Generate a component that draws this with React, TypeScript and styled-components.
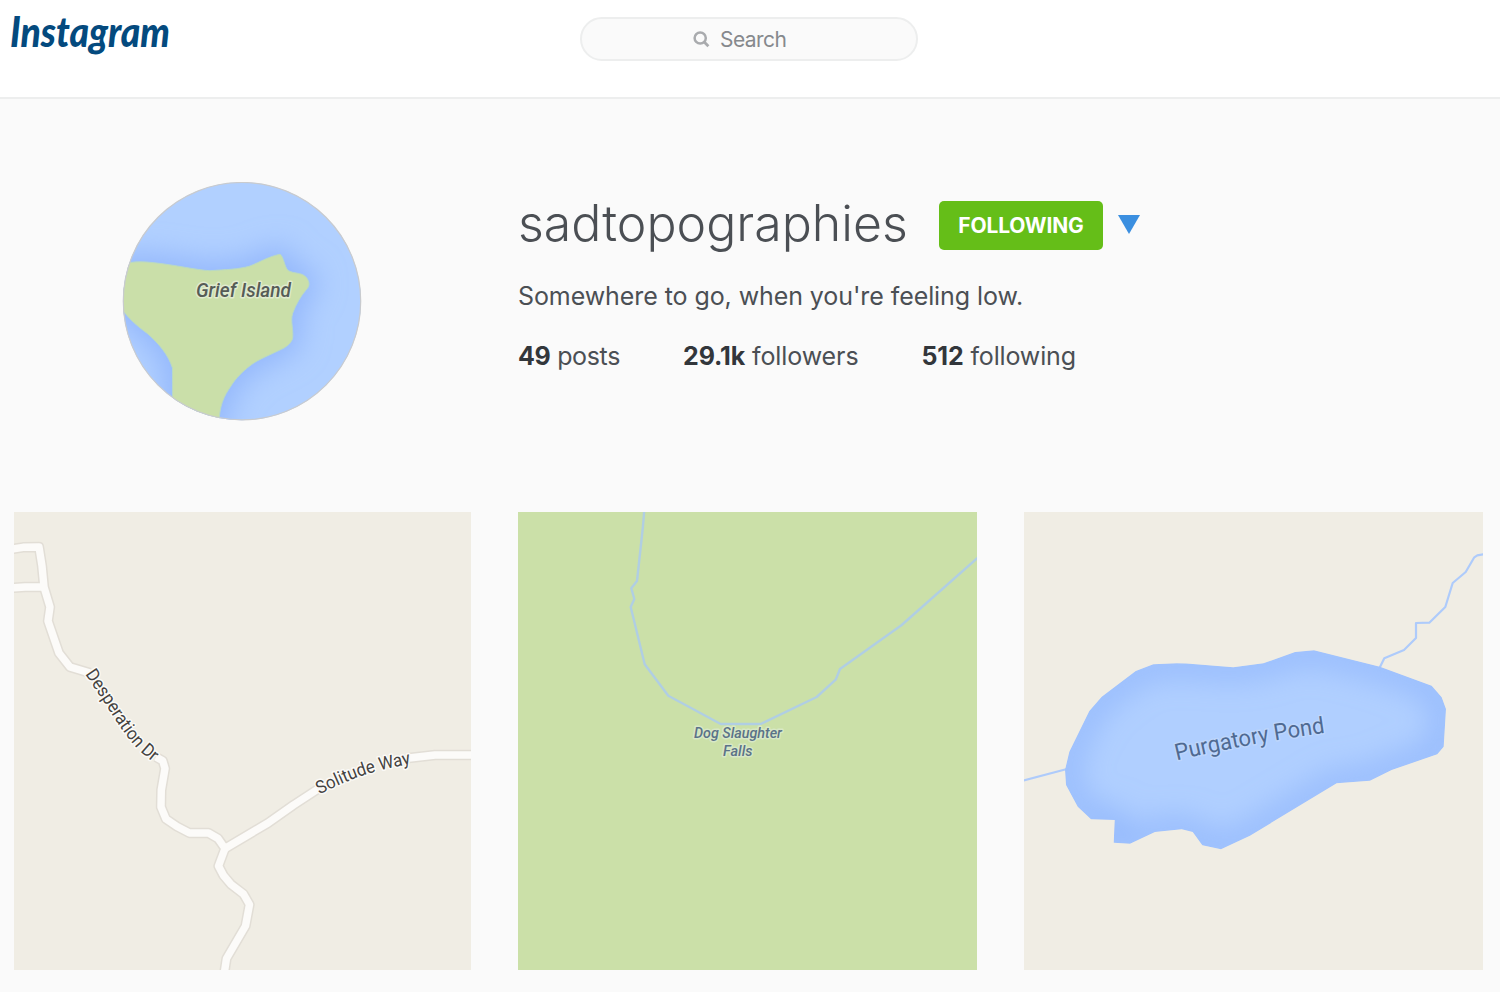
import React from "react";
import styled, { createGlobalStyle } from "styled-components";

const GlobalStyle = createGlobalStyle`
  * { box-sizing: border-box; }
  body {
    margin: 0;
    background: #fafafa;
    color: #4b4f54;
    font-family: Inter, "Liberation Sans", sans-serif;
    overflow: hidden;
  }
`;

const Page = styled.div`
  width: 1500px;
  height: 992px;
  background: #fafafa;
`;

const Header = styled.header`
  display: grid;
  grid-template-columns: 580px 338px 1fr;
  align-items: start;
  height: 99px;
  background: #fff;
  border-bottom: 2px solid #edeeee;
`;

const Wordmark = styled.svg`
  display: block;
  width: 260px;
  height: 80px;
  overflow: visible;
  text {
    font: italic 900 42px Lato, sans-serif;
    fill: #044a7e;
  }
`;

const SearchBox = styled.div`
  display: flex;
  align-items: center;
  gap: 10px;
  height: 44px;
  margin-top: 17px;
  padding-left: 111px;
  border: 2px solid #edeeee;
  border-radius: 22px;
  background: #fafafa;
  color: #86898d;
  font-size: 21px;
  line-height: 26px;
  letter-spacing: -0.55px;
  span {
    padding-top: 2px;
  }
`;

const Profile = styled.section`
  display: flex;
  align-items: flex-start;
  height: 413px;
  padding: 83px 0 0 122px;
`;

const Avatar = styled.svg`
  display: block;
  flex: none;
  width: 240px;
  height: 240px;
  margin-right: 156px;
`;

const Info = styled.div`
  display: flex;
  flex-direction: column;
`;

const NameRow = styled.div`
  display: flex;
  align-items: center;
  height: 86px;
`;

const UserName = styled.h1`
  width: 421px;
  margin: 0;
  padding-bottom: 5px;
  font-size: 50px;
  font-weight: 300;
  line-height: 60px;
  white-space: nowrap;
`;

const FollowButton = styled.button`
  width: 164px;
  height: 49px;
  padding: 0;
  border: 0;
  border-radius: 5px;
  background: #65be18;
  color: #fff;
  font: 700 21px Inter, sans-serif;
  letter-spacing: -0.15px;
`;

const Caret = styled.svg`
  display: block;
  width: 22px;
  height: 19px;
  margin: 0 0 2px 15px;
`;

const Bio = styled.p`
  margin: 12px 0 0;
  font-size: 25px;
  line-height: 32px;
  letter-spacing: -0.08px;
  white-space: nowrap;
`;

const Stats = styled.ul`
  display: flex;
  gap: 63px;
  margin: 28px 0 0;
  padding: 0;
  list-style: none;
  font-size: 25px;
  line-height: 32px;
  white-space: nowrap;
`;

const Stat = styled.li<{ $width: number; $tracking: number }>`
  width: ${(p) => p.$width}px;
  letter-spacing: ${(p) => p.$tracking}px;
  b {
    color: #32363b;
    font-weight: 700;
  }
`;

const Gallery = styled.main`
  display: grid;
  grid-template-columns: 457px 459px 459px;
  gap: 47px;
  padding-left: 14px;
`;

const Tile = styled.svg<{ $ground: string }>`
  display: block;
  width: 100%;
  height: 458px;
  background: ${(p) => p.$ground};
`;

const MapLabel = styled.text<{ $size: number; $color: string; $halo: string; $italic?: boolean }>`
  font-family: Roboto, sans-serif;
  font-size: ${(p) => p.$size}px;
  font-style: ${(p) => (p.$italic ? "italic" : "normal")};
  font-weight: ${(p) => (p.$italic ? 500 : 400)};
  fill: ${(p) => p.$color};
  stroke: ${(p) => p.$halo};
  stroke-width: 3px;
  stroke-linejoin: round;
  paint-order: stroke;
`;

const ROADS = [
  "M10 549.5L23 547.3L39 547L42 566L44 587L50 607L48 621L59 653L70 667L90 673",
  "M10 588L25 587L44 587",
  "M156 757L162.7 760.7L165 768.5L161.3 790L161 807L166 819L177 826.5L189.5 833L208.5 833L218 838.5L225 848.5L218.5 866L223.5 875.5L231 884.3L243.5 894L249.5 904.5L245.5 926L226.5 958.5L224 975",
  "M225 848.5L268 823L293.5 805L318 789",
  "M409 758L435 755L475 755",
];

const POND =
  "M1153.3 664.3L1176.7 663.3L1186.7 663.5L1233.3 667.3L1263.3 663.3L1295 652L1314 650.3L1380 666.7L1431.7 685.7L1441.7 697.3L1446 709L1443.7 746.7L1437.3 754.3L1391.7 770L1370 780.7L1336.7 783.3L1250 835.7L1221 849.3L1202.3 845.3L1192.7 832L1181.7 829.3L1155 832L1130 843.7L1113.7 842.7L1114.7 820L1091 819.3L1077.7 806.7L1066 785L1065 770L1069.3 751.7L1089.3 711L1101.7 696.7L1135.7 671Z";

const ISLAND =
  "M115 266C128 262 138 261 152 262.5C176 265 196 270 210 270.7C226 269.5 238 269.5 250 266C260 262 270 256 280 254.3C284 257 284 266 288 270.5C294 274 301 272 306 277C310 282 310 286 306 290C301 296 296 304 292.7 313.3C290 321 294 331 292.5 339C290 344 288 345.5 284 348C270 355 259 359 251 365C242 372 236 378 231 386C224 396 219 406 219 425L172.7 425L172.5 368C168 354 158 343 148 334C140 328 132 322 124 312L115 305Z";

function SadAvatar() {
  return (
    <Avatar viewBox="122 182 240 240">
      <defs>
        <clipPath id="disc"><circle cx="242" cy="301.2" r="119" /></clipPath>
        <filter id="shore" x="-30%" y="-30%" width="160%" height="160%"><feGaussianBlur stdDeviation="14" /></filter>
      </defs>
      <g clipPath="url(#disc)">
        <rect x="122" y="182" width="240" height="240" fill="#b1d0ff" />
        <path d={ISLAND} fill="#94b8fc" stroke="#94b8fc" strokeWidth="18" filter="url(#shore)" />
        <path d={ISLAND} fill="#cadfa9" stroke="#b9d9c4" strokeWidth="1" />
      </g>
      <circle cx="242" cy="301.2" r="118.7" fill="none" stroke="#c9cbce" strokeWidth="1.2" />
      <MapLabel $size={20} $color="#565c56" $halo="#e0ebcf" $italic x="196" y="297" textLength="95" lengthAdjust="spacingAndGlyphs">
        Grief Island
      </MapLabel>
    </Avatar>
  );
}

function RoadMap() {
  return (
    <Tile $ground="#f0ede4" viewBox="14 512 457 458">
      <defs>
        <path id="desperation" d="M85 674L104 702Q121 730 134 745Q144 756 162 769" />
        <path id="solitude" d="M319.5 794.5Q357 775 386 769L421 761.5" />
      </defs>
      <g fill="none" strokeLinejoin="round">
        {ROADS.map((d) => <path key={d} d={d} stroke="#e2ded6" strokeWidth="10.4" />)}
        {ROADS.map((d) => <path key={d} d={d} stroke="#fcfbf9" strokeWidth="7.4" />)}
      </g>
      <MapLabel $size={18} $color="#44423f" $halo="#fbfaf7">
        <textPath href="#desperation" textLength="112" lengthAdjust="spacingAndGlyphs">Desperation Dr</textPath>
      </MapLabel>
      <MapLabel $size={18} $color="#44423f" $halo="#fbfaf7">
        <textPath href="#solitude" textLength="97" lengthAdjust="spacingAndGlyphs">Solitude Way</textPath>
      </MapLabel>
    </Tile>
  );
}

function FallsMap() {
  return (
    <Tile $ground="#cbe0a8" viewBox="518 512 459 458">
      <path
        d="M644.3 510L643 526L637 581L631.3 588.3L634.3 599L630.7 607L644.7 664.3L668.3 695.7L720.7 724L760.7 724L816.7 697L835.7 679.7L840 669L901.7 625L978 557.5"
        fill="none"
        stroke="#b0cee3"
        strokeWidth="2.4"
        strokeLinejoin="round"
      />
      <MapLabel $size={14.5} $color="#5b7288" $halo="#d8e8c6" $italic x="694" y="738" textLength="88" lengthAdjust="spacingAndGlyphs">
        Dog Slaughter
      </MapLabel>
      <MapLabel $size={14.5} $color="#5b7288" $halo="#d8e8c6" $italic x="723" y="756.3" textLength="29.5" lengthAdjust="spacingAndGlyphs">
        Falls
      </MapLabel>
    </Tile>
  );
}

function PondMap() {
  return (
    <Tile $ground="#f0ede4" viewBox="1024 512 459 458">
      <defs>
        <clipPath id="pond"><path d={POND} /></clipPath>
        <filter id="depth" x="-20%" y="-30%" width="140%" height="160%"><feGaussianBlur stdDeviation="16" /></filter>
        <path id="pondName" d="M1177 760.5Q1250 743 1337 731" />
      </defs>
      <g fill="none" stroke="#aecbfb" strokeWidth="2.2" strokeLinejoin="round">
        <path d="M1022 781L1067 769" />
        <path d="M1379.5 668L1384.3 658.3L1404 650L1416 638L1416 623L1429.3 622.7L1445.3 607L1452.7 583L1465.7 572L1474.3 557.3L1477.3 555.3L1485 554" />
      </g>
      <g clipPath="url(#pond)">
        <path d={POND} fill="#b0cfff" />
        <path d={POND} fill="none" stroke="#86aefb" strokeWidth="16" filter="url(#depth)" />
      </g>
      <MapLabel $size={23} $color="#4f6a92" $halo="#bdd6fc">
        <textPath href="#pondName" textLength="151" lengthAdjust="spacingAndGlyphs">Purgatory Pond</textPath>
      </MapLabel>
    </Tile>
  );
}

export default function App() {
  return (
    <Page>
      <GlobalStyle />
      <Header>
        <Wordmark viewBox="0 0 260 80">
          <text x="10" y="47" textLength="160" lengthAdjust="spacingAndGlyphs">Instagram</text>
        </Wordmark>
        <SearchBox>
          <svg width="17" height="17" viewBox="0 0 17 17" fill="none" stroke="#a9abae">
            <circle cx="7.2" cy="7" r="5.6" strokeWidth="2.5" />
            <path d="M11.2 11L15.4 15.2" strokeWidth="2.8" />
          </svg>
          <span>Search</span>
        </SearchBox>
      </Header>
      <Profile>
        <SadAvatar />
        <Info>
          <NameRow>
            <UserName>sadtopographies</UserName>
            <FollowButton>FOLLOWING</FollowButton>
            <Caret viewBox="0 0 22 19"><path d="M0 0H22L11 19Z" fill="#3b8fe0" /></Caret>
          </NameRow>
          <Bio>Somewhere to go, when you're feeling low.</Bio>
          <Stats>
            <Stat $width={102} $tracking={-0.35}><b>49</b> posts</Stat>
            <Stat $width={175.5} $tracking={-0.1}><b>29.1k</b> followers</Stat>
            <Stat $width={160} $tracking={-0.15}><b>512</b> following</Stat>
          </Stats>
        </Info>
      </Profile>
      <Gallery>
        <RoadMap />
        <FallsMap />
        <PondMap />
      </Gallery>
    </Page>
  );
}
